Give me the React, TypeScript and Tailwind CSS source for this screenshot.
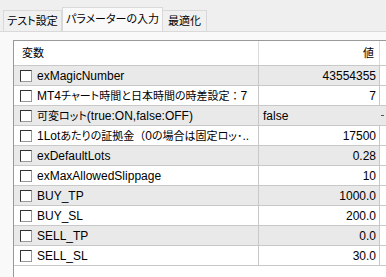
type Row = {
  name: string;
  value: string;
  align?: "left" | "right";
  combo?: boolean;
};

const rows: Row[] = [
  { name: "exMagicNumber", value: "43554355" },
  { name: "MT4チャート時間と日本時間の時差設定：7", value: "7" },
  { name: "可変ロット(true:ON,false:OFF)", value: "false", align: "left", combo: true },
  { name: "1Lotあたりの証拠金（0の場合は固定ロッ･..", value: "17500" },
  { name: "exDefaultLots", value: "0.28" },
  { name: "exMaxAllowedSlippage", value: "10" },
  { name: "BUY_TP", value: "1000.0" },
  { name: "BUY_SL", value: "200.0" },
  { name: "SELL_TP", value: "0.0" },
  { name: "SELL_SL", value: "30.0" },
];

// japanese runs are set a bit smaller so they fit like the original UI font,
// full-width punctuation keeps its full width
function Jp({ text }: { text: string }) {
  const parts = text.split(/([\u3000-\u30ff\u4e00-\u9fff\uff61-\uffef]+|[\uff01-\uff60]+)/);
  return (
    <>
      {parts.map((p, i) => {
        if (i % 2 === 0) return <span key={i}>{p}</span>;
        if (/^[\uff01-\uff60]+$/.test(p))
          return (
            <span key={i} className="text-[11px]">
              {p}
            </span>
          );
        return (
          <span key={i} className="text-[11px] [font-feature-settings:'palt']">
            {p}
          </span>
        );
      })}
    </>
  );
}

function CheckBox() {
  return (
    <span className="w-[12px] h-[12px] shrink-0 bg-white border border-t-[#333] border-l-[#333] border-b-[#999] border-r-[#999]" />
  );
}

function ParamRow({ row, odd }: { row: Row; odd: boolean }) {
  return (
    <div
      className={
        "flex h-[20px] border-b border-[#c8c8c8] " +
        (odd ? "bg-[#e9e9e9]" : "bg-white")
      }
    >
      <div className="w-[244px] flex items-center pl-[6px] gap-[5px] overflow-hidden whitespace-nowrap">
        <CheckBox />
        <span>
          <Jp text={row.name} />
        </span>
      </div>
      <div
        className={
          "w-[122px] border-l border-[#c8c8c8] flex items-center " +
          (row.combo ? "" : "border-r ") +
          (row.align === "left" ? "justify-start pl-[4px]" : "justify-end pr-[3px]")
        }
      >
        {row.value}
      </div>
      <div className={"flex-1 flex items-center " + (row.combo ? "bg-[#e9e9e9]" : "bg-white")}>
        {row.combo && <span className="ml-[1px] w-[3px] h-[1px] bg-[#555]" />}
      </div>
    </div>
  );
}

export default function App() {
  return (
    <div className="w-[386px] h-[277px] bg-[#efefef] overflow-hidden flex flex-col text-[12px] text-black font-['Liberation_Sans','Noto_Sans_CJK_JP',sans-serif]">
      <div className="h-[31px] flex items-end pl-[3px] shrink-0">
        <div className="w-[59px] h-[21px] border border-b-0 border-[#d9d9d9] bg-[#f0f0f0] flex items-center justify-center">
          <Jp text="テスト設定" />
        </div>
        <div className="w-[101px] h-[24px] border border-b-0 border-[#d9d9d9] bg-[#f9f9f9] flex items-center justify-center">
          <Jp text="パラメーターの入力" />
        </div>
        <div className="w-[44px] h-[21px] border border-b-0 border-l-0 border-[#d9d9d9] bg-[#f0f0f0] flex items-center justify-center">
          <Jp text="最適化" />
        </div>
      </div>
      <div className="flex-1 bg-[#f9f9f9] border-t border-[#d9d9d9] pt-[8px] pl-[13px] flex flex-col">
        <div className="flex-1 bg-white border-t border-l border-[#999] flex flex-col">
          <div className="flex h-[25px] border-b border-[#c8c8c8]">
            <div className="w-[244px] flex items-center pl-[8px]">
              <Jp text="変数" />
            </div>
            <div className="w-[122px] border-l border-r border-[#dcdcdc] flex items-center justify-end pr-[5px]">
              <Jp text="値" />
            </div>
          </div>
          {rows.map((r, i) => (
            <ParamRow key={r.name} row={r} odd={i % 2 === 0} />
          ))}
        </div>
      </div>
    </div>
  );
}
